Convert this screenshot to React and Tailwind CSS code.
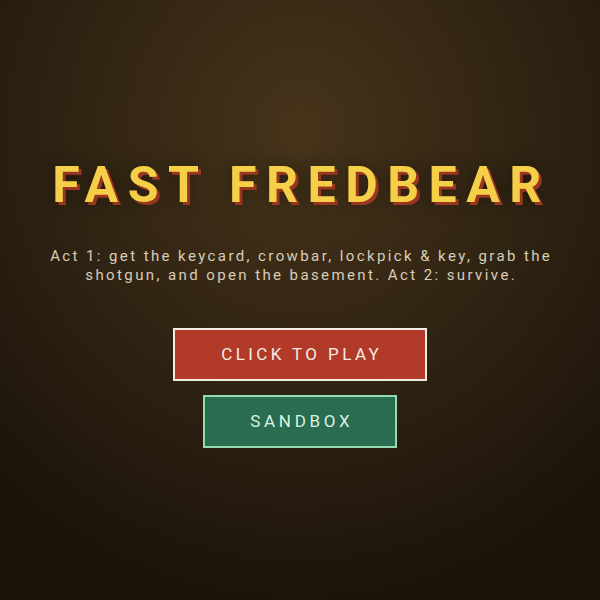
export default function App() {
  return (
    <div
      className="w-[600px] h-[600px] flex flex-col items-center bg-[radial-gradient(ellipse_75%_80%_at_50%_22%,#46341a_0%,#2e2212_55%,#1b1309_100%)]"
      style={{ fontFamily: "Roboto, 'Liberation Sans', sans-serif" }}
    >
      <h1 className="mt-[155px] pl-[3px] text-[50px] leading-[60px] font-bold tracking-[9.5px] text-[#f6cf48] [text-shadow:3px_3px_0_#9a3520,0_0_18px_rgba(0,0,0,0.45)]">
        FAST FREDBEAR
      </h1>
      <p className="mt-[32px] w-[560px] pl-[2.4px] text-center text-[15px] leading-[19px] tracking-[2.4px] text-[#d9cdb8]">
        Act 1: get the keycard, crowbar, lockpick &amp; key, grab the
        <br />
        shotgun, and open the basement. Act 2: survive.
      </p>
      <button className="mt-[43px] w-[254px] h-[53px] pl-[3.4px] border-2 border-[#f3ece4] bg-[#b23a29] text-[#f6ece4] text-[17px] tracking-[3.4px]">
        CLICK TO PLAY
      </button>
      <button className="mt-[14px] w-[194px] h-[53px] pl-[3.7px] border-2 border-[#93dcb2] bg-[#2a6c50] text-[#d8f2e2] text-[17px] tracking-[3.7px]">
        SANDBOX
      </button>
    </div>
  );
}
